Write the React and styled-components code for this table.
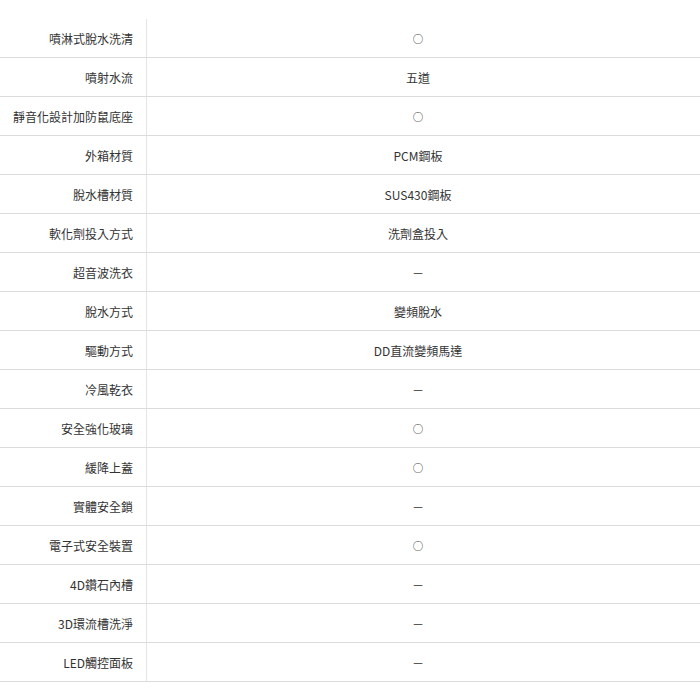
import React from "react";
import styled, { createGlobalStyle } from "styled-components";

const GlobalStyle = createGlobalStyle`
    body {
        margin: 0;
        background: #fff;
        font-family: "Noto Sans CJK TC", "Noto Sans", sans-serif;
    }
`;

const SpecTable = styled.div`
    padding-top: 19px;
    width: 700px;
`;

const Row = styled.div`
    display: grid;
    grid-template-columns: 147px 1fr;
    height: 39px;
    border-bottom: 1px solid #dcdcdc;
    box-sizing: border-box;
`;

const Label = styled.div`
    display: flex;
    align-items: center;
    justify-content: flex-end;
    padding-right: 13px;
    border-right: 1px solid #e4e4e4;
    font-size: 12px;
    color: #333;
`;

const Value = styled.div`
    display: flex;
    align-items: center;
    justify-content: center;
    padding-right: 11px;
    font-size: ${(p) => (p.$mark ? "10.5px" : "12px")};
    color: #333;
`;

const specs = [
    ["噴淋式脫水洗清", "○"],
    ["噴射水流", "五道"],
    ["靜音化設計加防鼠底座", "○"],
    ["外箱材質", "PCM鋼板"],
    ["脫水槽材質", "SUS430鋼板"],
    ["軟化劑投入方式", "洗劑盒投入"],
    ["超音波洗衣", "－"],
    ["脫水方式", "變頻脫水"],
    ["驅動方式", "DD直流變頻馬達"],
    ["冷風乾衣", "－"],
    ["安全強化玻璃", "○"],
    ["緩降上蓋", "○"],
    ["實體安全鎖", "－"],
    ["電子式安全裝置", "○"],
    ["4D鑽石內槽", "－"],
    ["3D環流槽洗淨", "－"],
    ["LED觸控面板", "－"],
];

function App() {
    return (
        <>
            <GlobalStyle />
            <SpecTable>
                {specs.map(([name, value]) => (
                    <Row key={name}>
                        <Label>{name}</Label>
                        <Value $mark={value === "○"}>{value}</Value>
                    </Row>
                ))}
            </SpecTable>
        </>
    );
}

export default App;
